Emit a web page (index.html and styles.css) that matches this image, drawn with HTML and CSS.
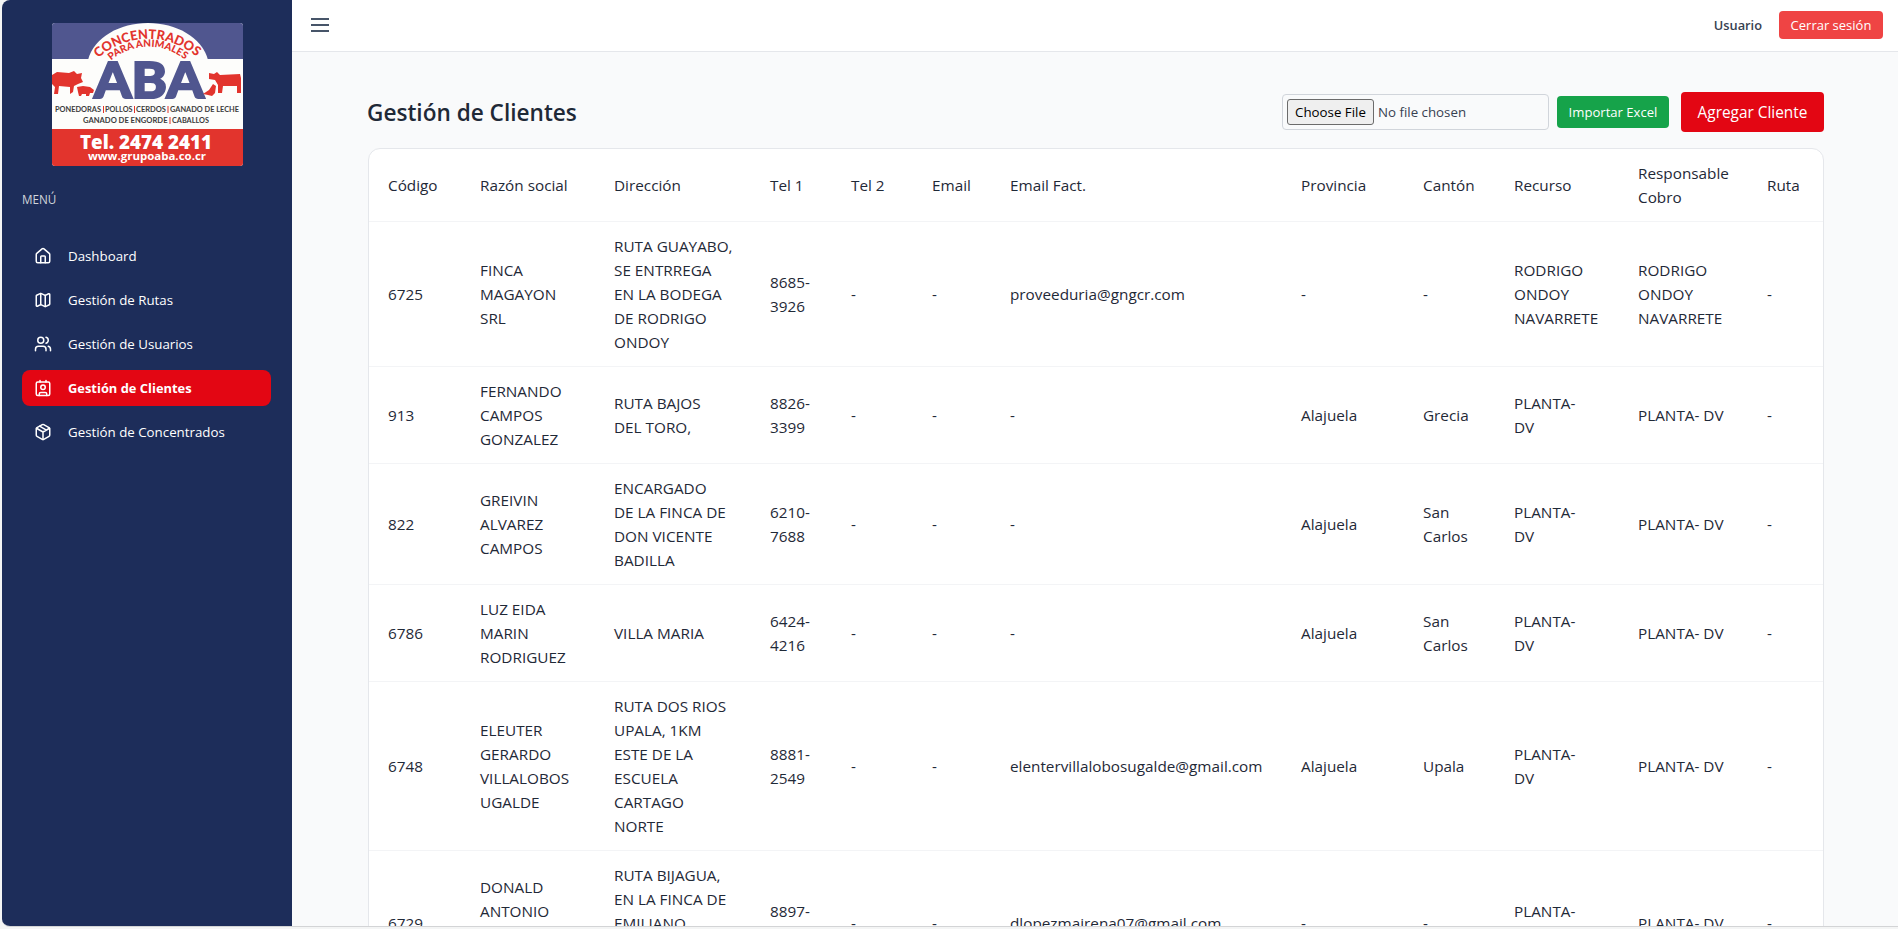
FILE: index.html
```html
<!DOCTYPE html>
<html lang="es">
<head>
<meta charset="utf-8">
<title>Gestión de Clientes</title>
<link rel="stylesheet" href="styles.css">
</head>
<body>
<div class="app">
  <aside class="sidebar">
    <svg class="logo" viewBox="0 0 191 143" role="img" aria-label="Concentrados ABA">
      <defs>
        <path id="arc-outer" d="M46.500 35 A74 74 0 0 1 146 35"/>
        <path id="arc-inner" d="M59 37.500 A58 58 0 0 1 134 37.500"/>
      </defs>
      <rect width="191" height="143" fill="#fdfdfb"/>
      <rect width="191" height="36" fill="#50568f"/>
      <path d="M36 37 C42 14 68 0 96 0 C124 0 150 14 156 37 Z" fill="#fdfdfb"/>
      <rect y="106" width="191" height="37" fill="#e2342d"/>
      <text class="logo-outer"><textPath href="#arc-outer" textLength="107" lengthAdjust="spacingAndGlyphs">CONCENTRADOS</textPath></text>
      <text class="logo-inner"><textPath href="#arc-inner" textLength="80" lengthAdjust="spacingAndGlyphs">PARA ANIMALES</textPath></text>
      <text class="logo-aba" x="42" y="75" textLength="110" lengthAdjust="spacingAndGlyphs">ABA</text>
      <g fill="#e2342d">
        <path d="M0 52 L5 49 L17 50 L22 48 L25 51 L30 50 L29 55 L31 59 L26 61 L22 63 L21 69 L18 71 L18 64 L7 63 L6 71 L2 71 L3 64 L0 61Z"/>
        <path d="M25 64 L31 63 L38 64 L42 67 L41 70 L38 70 L37 73 L34 73 L34 71 L30 71 L29 73 L27 73 L26 69Z"/>
        <path d="M157 50 L162 51 L165 49 L168 52 L188 51 L189 55 L189 70 L185 70 L185 63 L171 63 L170 70 L166 70 L166 62 L163 57 L157 56Z"/>
        <path d="M151 71 L157 67 L161 61 L164 63 L163 70 L160 73 L156 72Z"/>
      </g>
      <g class="logo-small">
        <text x="3" y="89" textLength="46" lengthAdjust="spacingAndGlyphs">PONEDORAS</text>
        <text x="53" y="89" textLength="27.500" lengthAdjust="spacingAndGlyphs">POLLOS</text>
        <text x="84" y="89" textLength="30" lengthAdjust="spacingAndGlyphs">CERDOS</text>
        <text x="118" y="89" textLength="69" lengthAdjust="spacingAndGlyphs">GANADO DE LECHE</text>
        <text x="31" y="100" textLength="84.500" lengthAdjust="spacingAndGlyphs">GANADO DE ENGORDE</text>
        <text x="120" y="100" textLength="37" lengthAdjust="spacingAndGlyphs">CABALLOS</text>
      </g>
      <path d="M51.500 83v7M82.500 83v7M116 83v7M118 94v7" stroke="#e2342d"/>
      <text class="logo-tel" x="28" y="125.500" textLength="132" lengthAdjust="spacingAndGlyphs">Tel. 2474 2411</text>
      <text class="logo-web" x="36" y="137" textLength="118" lengthAdjust="spacingAndGlyphs">www.grupoaba.co.cr</text>
    </svg>
    <p class="menu-label">MENÚ</p>
    <nav class="menu">
      <a class="menu-item"><svg class="icon" viewBox="0 0 24 24"><path d="M15 21v-8a1 1 0 0 0-1-1h-4a1 1 0 0 0-1 1v8"/><path d="M3 10a2 2 0 0 1 .709-1.528l7-5.999a2 2 0 0 1 2.582 0l7 5.999A2 2 0 0 1 21 10v9a2 2 0 0 1-2 2H5a2 2 0 0 1-2-2z"/></svg><span>Dashboard</span></a>
      <a class="menu-item"><svg class="icon" viewBox="0 0 24 24"><path d="M14.106 5.553a2 2 0 0 0 1.788 0l3.659-1.830A1 1 0 0 1 21 4.619v12.764a1 1 0 0 1-.553.894l-4.553 2.277a2 2 0 0 1-1.788 0l-4.212-2.106a2 2 0 0 0-1.788 0l-3.659 1.830A1 1 0 0 1 3 19.381V6.618a1 1 0 0 1 .553-.894l4.553-2.277a2 2 0 0 1 1.788 0z"/><path d="M15 5.764v15M9 3.236v15"/></svg><span>Gestión de Rutas</span></a>
      <a class="menu-item"><svg class="icon" viewBox="0 0 24 24"><path d="M16 21v-2a4 4 0 0 0-4-4H6a4 4 0 0 0-4 4v2"/><circle cx="9" cy="7" r="4"/><path d="M22 21v-2a4 4 0 0 0-3-3.870M16 3.130a4 4 0 0 1 0 7.750"/></svg><span>Gestión de Usuarios</span></a>
      <a class="menu-item active"><svg class="icon" viewBox="0 0 24 24"><path d="M16 2v2M8 2v2M17 22v-2a2 2 0 0 0-2-2H9a2 2 0 0 0-2 2v2"/><circle cx="12" cy="11" r="3"/><rect x="3" y="4" width="18" height="18" rx="2"/></svg><span>Gestión de Clientes</span></a>
      <a class="menu-item"><svg class="icon" viewBox="0 0 24 24"><path d="M11 21.730a2 2 0 0 0 2 0l7-4A2 2 0 0 0 21 16V8a2 2 0 0 0-1-1.730l-7-4a2 2 0 0 0-2 0l-7 4A2 2 0 0 0 3 8v8a2 2 0 0 0 1 1.730z"/><path d="M12 22V12M3.290 7 12 12l8.710-5M7.500 4.270l9 5.150"/></svg><span>Gestión de Concentrados</span></a>
    </nav>
  </aside>
  <div class="main">
    <header class="topbar">
      <svg class="burger" viewBox="0 0 18 14"><path d="M0 1h18M0 7h18M0 13h18"/></svg>
      <div class="session">
        <span class="user">Usuario</span>
        <button class="btn logout">Cerrar sesión</button>
      </div>
    </header>
    <main class="content">
      <div class="heading">
        <h1>Gestión de Clientes</h1>
        <div class="actions">
          <div class="file"><span class="file-btn">Choose File</span><span class="file-name">No file chosen</span></div>
          <button class="btn import">Importar Excel</button>
          <button class="btn add">Agregar Cliente</button>
        </div>
      </div>
      <div class="card">
        <table>
          <colgroup><col class="c-code"><col class="c-name"><col class="c-dir"><col class="c-tel"><col class="c-tel"><col class="c-email"><col class="c-fact"><col class="c-prov"><col class="c-canton"><col class="c-rec"><col class="c-resp"><col class="c-ruta"></colgroup>
          <thead><tr><th>Código</th><th>Razón social</th><th>Dirección</th><th>Tel 1</th><th>Tel 2</th><th>Email</th><th>Email Fact.</th><th>Provincia</th><th>Cantón</th><th>Recurso</th><th>Responsable<br>Cobro</th><th>Ruta</th></tr></thead>
          <tbody>
            <tr><td>6725</td><td>FINCA<br>MAGAYON<br>SRL</td><td>RUTA GUAYABO,<br>SE ENTRREGA<br>EN LA BODEGA<br>DE RODRIGO<br>ONDOY</td><td>8685-<br>3926</td><td>-</td><td>-</td><td>proveeduria@gngcr.com</td><td>-</td><td>-</td><td>RODRIGO<br>ONDOY<br>NAVARRETE</td><td>RODRIGO<br>ONDOY<br>NAVARRETE</td><td>-</td></tr>
            <tr><td>913</td><td>FERNANDO<br>CAMPOS<br>GONZALEZ</td><td>RUTA BAJOS<br>DEL TORO,</td><td>8826-<br>3399</td><td>-</td><td>-</td><td>-</td><td>Alajuela</td><td>Grecia</td><td>PLANTA-<br>DV</td><td>PLANTA- DV</td><td>-</td></tr>
            <tr><td>822</td><td>GREIVIN<br>ALVAREZ<br>CAMPOS</td><td>ENCARGADO<br>DE LA FINCA DE<br>DON VICENTE<br>BADILLA</td><td>6210-<br>7688</td><td>-</td><td>-</td><td>-</td><td>Alajuela</td><td>San<br>Carlos</td><td>PLANTA-<br>DV</td><td>PLANTA- DV</td><td>-</td></tr>
            <tr><td>6786</td><td>LUZ EIDA<br>MARIN<br>RODRIGUEZ</td><td>VILLA MARIA</td><td>6424-<br>4216</td><td>-</td><td>-</td><td>-</td><td>Alajuela</td><td>San<br>Carlos</td><td>PLANTA-<br>DV</td><td>PLANTA- DV</td><td>-</td></tr>
            <tr><td>6748</td><td>ELEUTER<br>GERARDO<br>VILLALOBOS<br>UGALDE</td><td>RUTA DOS RIOS<br>UPALA, 1KM<br>ESTE DE LA<br>ESCUELA<br>CARTAGO<br>NORTE</td><td>8881-<br>2549</td><td>-</td><td>-</td><td>elentervillalobosugalde@gmail.com</td><td>Alajuela</td><td>Upala</td><td>PLANTA-<br>DV</td><td>PLANTA- DV</td><td>-</td></tr>
            <tr class="tall"><td>6729</td><td class="raised">DONALD<br>ANTONIO</td><td class="top">RUTA BIJAGUA,<br>EN LA FINCA DE<br>EMILIANO</td><td class="raised-one">8897-</td><td>-</td><td>-</td><td>dlopezmairena07@gmail.com</td><td>-</td><td>-</td><td class="raised-one">PLANTA-</td><td>PLANTA- DV</td><td>-</td></tr>
          </tbody>
        </table>
      </div>
    </main>
  </div>
</div>
</body>
</html>
```
FILE: styles.css
```css
* { box-sizing: border-box; }
html, body { margin: 0; height: 100%; overflow: hidden; }
body { background: #f4f5f5; padding: 0 0 2px 2px; font-family: "Open Sans", "Noto Sans", sans-serif; color: #1f2937; }
.app { display: flex; height: 927px; overflow: hidden; background: #f9fafb; border-radius: 8px 0 0 8px; border-bottom: 1px solid #d3d4d6; }
.sidebar { flex: 0 0 290px; background: #1d2d5a; color: #fff; padding: 23px 21px 0 20px; }
.logo { display: block; width: 191px; height: 143px; margin: 0 0 0 30px; border-radius: 3px; }
.logo-outer { font: 900 13px Lato, sans-serif; fill: #e2342d; }
.logo-inner { font: 900 10px Lato, sans-serif; fill: #e2342d; }
.logo-aba { font: 900 50px Lato, sans-serif; fill: #50568f; stroke: #50568f; stroke-width: 2px; }
.logo-small { font: 700 7px Lato, sans-serif; fill: #3b3b3b; }
.logo-tel { font: 800 20px "Open Sans", sans-serif; fill: #fff; }
.logo-web { font: 700 11px "Open Sans", sans-serif; fill: #fff; }
.menu-label { margin: 23px 0 0; font-size: 11.7px; line-height: 20px; color: #d1d5db; }
.menu { display: flex; flex-direction: column; gap: 8px; margin-top: 29px; }
.menu-item { display: flex; align-items: center; gap: 16px; height: 36px; padding: 0 12px; border-radius: 8px; font-size: 13.3px; font-weight: 500; line-height: 20px; white-space: nowrap; }
.menu-item.active { background: #e30613; font-size: 12.9px; font-weight: 700; }
.icon { flex: none; width: 18px; height: 18px; fill: none; stroke: currentColor; stroke-width: 2; stroke-linecap: round; stroke-linejoin: round; }
.main { flex: 1; min-width: 0; }
.topbar { display: flex; align-items: center; justify-content: space-between; height: 52px; padding: 0 15px 2px 19px; background: #fff; border-bottom: 1px solid #e5e7eb; }
.burger { width: 18px; height: 14px; stroke: #475569; stroke-width: 2; }
.session { display: flex; align-items: center; gap: 17px; }
.user { font-size: 12.8px; font-weight: 600; color: #374151; }
.btn { display: block; border: 0; padding: 0; border-radius: 4px; color: #fff; font-family: inherit; white-space: nowrap; }
.logout { width: 104px; height: 28px; background: #ef4444; font-size: 13px; }
.content { padding: 40px 74px 0 76px; }
.heading { display: flex; align-items: center; justify-content: space-between; height: 40px; margin-bottom: 16px; }
h1 { margin: 2px 0 0 -1px; font-size: 22.6px; font-weight: 600; line-height: 32px; white-space: nowrap; }
.actions { display: flex; align-items: center; }
.file { display: flex; align-items: center; gap: 4px; width: 267px; height: 36px; margin-right: 8px; padding-left: 4px; border: 1px solid #d1d5db; border-radius: 4px; font-size: 13.3px; color: #374151; }
.file-btn { width: 87px; height: 26px; line-height: 24px; text-align: center; border: 1px solid #6b6b6b; border-radius: 3px; background: #efefef; color: #000; }
.import { width: 112px; height: 32px; margin-right: 12px; background: #16a34a; font-size: 13.1px; }
.add { width: 143px; height: 40px; background: #e30613; font-size: 15.4px; }
.card { width: 1456px; border: 1px solid #e5e7eb; border-radius: 12px; background: #fff; overflow: hidden; }
table { width: 1454px; table-layout: fixed; border-collapse: separate; border-spacing: 0; font-size: 15.3px; line-height: 24px; }
th, td { padding: 12px 0 12px 20px; border-bottom: 1px solid #f3f4f6; text-align: left; font-weight: 400; vertical-align: middle; white-space: nowrap; }
th:first-child, td:first-child { padding-left: 19px; }
.c-code { width: 91px; }
.c-name { width: 134px; }
.c-dir { width: 156px; }
.c-tel { width: 81px; }
.c-email { width: 78px; }
.c-fact { width: 291px; }
.c-prov { width: 122px; }
.c-canton { width: 91px; }
.c-rec { width: 124px; }
.c-resp { width: 129px; }
.c-ruta { width: 76px; }
.tall td { height: 145px; }
.tall .top { vertical-align: top; }
.tall .raised { vertical-align: top; padding-top: 24px; }
.tall .raised-one { vertical-align: top; padding-top: 48px; }
```
